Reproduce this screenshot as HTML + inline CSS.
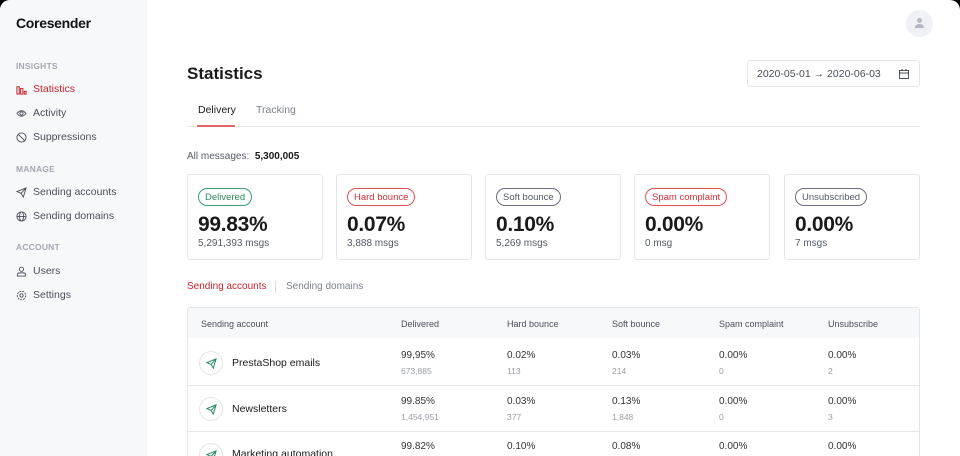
<!DOCTYPE html>
<html><head><meta charset="utf-8"><style>
*{margin:0;padding:0;box-sizing:border-box}
html,body{width:960px;height:456px;overflow:hidden;background:#000;font-family:"Liberation Sans",sans-serif}
.app{position:absolute;left:0;top:0;width:960px;height:456px;background:#fff;border-radius:10px 10px 0 0;overflow:hidden}
.side{position:absolute;left:0;top:0;width:147px;height:456px;background:#f7f8fa}
.abs{position:absolute;white-space:nowrap}
.logo{left:16px;top:15px;font-size:14px;font-weight:bold;color:#111;letter-spacing:-0.3px}
.sec{left:16px;font-size:8.5px;font-weight:bold;color:#a4a8b4;letter-spacing:.2px}
.nav{left:16px;font-size:10.5px;color:#4a4f5c;display:flex;align-items:center;gap:6px}
.nav svg{width:11px;height:11px}
.red{color:#c8242f}
.card{position:absolute;top:174px;width:136px;height:86px;border:1px solid #e3e5ea;border-radius:3px}
.pill{position:absolute;left:10px;top:13px;height:18px;line-height:17px;border:1px solid;border-radius:9px;padding:0 6px;font-size:9.5px}
.big{position:absolute;left:10px;top:38px;font-size:21px;font-weight:bold;color:#1a1a1a;letter-spacing:-0.3px}
.sub{position:absolute;left:10px;top:63px;font-size:10px;color:#555b68}
.th{font-size:9px;color:#4a4f5c;top:319px}
.v{font-size:10px;color:#333}
.s{font-size:8.5px;color:#9a9ea8}
.ic{position:absolute;left:199px;width:24px;height:24px;border:1px solid #e3e5ea;border-radius:12px;display:flex;align-items:center;justify-content:center}
</style></head><body><div class="app">
<div class="side">
<div class="abs logo">Coresender</div>
<div class="abs sec" style="top:61px">INSIGHTS</div>
<div class="abs nav red" style="top:83px"><svg viewBox="0 0 12 12" fill="none" stroke="#c8242f" stroke-width="1.1"><rect x="1" y="3" width="2.5" height="8"/><rect x="5" y="5" width="2.5" height="6"/><rect x="9" y="8" width="2" height="3"/></svg>Statistics</div>
<div class="abs nav" style="top:107px"><svg viewBox="0 0 12 12" fill="none" stroke="#4a4f5c" stroke-width="1"><path d="M1 6Q6 0 11 6Q6 12 1 6Z"/><circle cx="6" cy="6" r="1.8"/></svg>Activity</div>
<div class="abs nav" style="top:131px"><svg viewBox="0 0 12 12" fill="none" stroke="#4a4f5c" stroke-width="1"><circle cx="6" cy="6" r="5"/><path d="M2.5 2.5L9.5 9.5"/></svg>Suppressions</div>
<div class="abs sec" style="top:164px">MANAGE</div>
<div class="abs nav" style="top:186px"><svg viewBox="0 0 12 12" fill="none" stroke="#4a4f5c" stroke-width="1"><path d="M1 5L11 1L8 11L5.5 7Z M5.5 7L11 1"/></svg>Sending accounts</div>
<div class="abs nav" style="top:210px"><svg viewBox="0 0 12 12" fill="none" stroke="#4a4f5c" stroke-width="1"><circle cx="6" cy="6" r="5"/><ellipse cx="6" cy="6" rx="2.2" ry="5"/><path d="M1 6H11"/></svg>Sending domains</div>
<div class="abs sec" style="top:242px">ACCOUNT</div>
<div class="abs nav" style="top:265px"><svg viewBox="0 0 12 12" fill="none" stroke="#4a4f5c" stroke-width="1"><circle cx="6" cy="3.5" r="2.3"/><path d="M1.5 11V9.5Q1.5 7.5 4 7.5H8Q10.5 7.5 10.5 9.5V11Z"/></svg>Users</div>
<div class="abs nav" style="top:289px"><svg viewBox="0 0 12 12" fill="none" stroke="#4a4f5c" stroke-width="1"><circle cx="6" cy="6" r="4.6" stroke-dasharray="2.2 1"/><circle cx="6" cy="6" r="1.8"/></svg>Settings</div>
</div>

<div class="abs" style="left:906px;top:10px;width:27px;height:27px;border-radius:14px;background:#f0f1f4"><svg style="position:absolute;left:8px;top:7px" width="11" height="12" viewBox="0 0 11 12" fill="#b5b9c3"><circle cx="5.5" cy="3.5" r="2.5"/><path d="M1 11Q1 7 5.5 7Q10 7 10 11Z"/></svg></div>
<div class="abs" style="left:187px;top:64px;font-size:17px;font-weight:bold;color:#1a1a1a">Statistics</div>
<div class="abs" style="left:747px;top:60px;width:173px;height:27px;border:1px solid #e3e5ea;border-radius:3px;font-size:10.5px;color:#4a4f5c;line-height:25px;padding-left:9px;padding-top:1px">2020-05-01 → 2020-06-03<svg style="position:absolute;right:10px;top:8px" width="10" height="10" viewBox="0 0 10 10" fill="none" stroke="#4a4f5c" stroke-width="1"><rect x="0.5" y="1.5" width="9" height="8"/><path d="M0.5 4H9.5M3 0V2M7 0V2"/></svg></div>
<div class="abs" style="left:198px;top:104px;font-size:10.5px;color:#1a1a1a">Delivery</div>
<div class="abs" style="left:256px;top:104px;font-size:10.5px;color:#7d8190">Tracking</div>
<div class="abs" style="left:187px;top:126px;width:733px;height:1px;background:#e5e7eb"></div>
<div class="abs" style="left:197px;top:125px;width:38px;height:2px;background:#e06868"></div>

<div class="abs" style="left:187px;top:151px;font-size:10px;color:#555b68">All messages: &nbsp;<b style="color:#1a1a1a">5,300,005</b></div>

<div class="card" style="left:187px"><div class="pill" style="color:#2a8a58;border-color:#3aa070">Delivered</div><div class="big">99.83%</div><div class="sub">5,291,393 msgs</div></div>
<div class="card" style="left:336px"><div class="pill" style="color:#d03038;border-color:#e05058">Hard bounce</div><div class="big">0.07%</div><div class="sub">3,888 msgs</div></div>
<div class="card" style="left:485px"><div class="pill" style="color:#555b68;border-color:#6a6e7e">Soft bounce</div><div class="big">0.10%</div><div class="sub">5,269 msgs</div></div>
<div class="card" style="left:634px"><div class="pill" style="color:#d03038;border-color:#e05058">Spam complaint</div><div class="big">0.00%</div><div class="sub">0 msg</div></div>
<div class="card" style="left:784px"><div class="pill" style="color:#555b68;border-color:#6a6e7e">Unsubscribed</div><div class="big">0.00%</div><div class="sub">7 msgs</div></div>

<div class="abs" style="left:187px;top:281px;font-size:10px;color:#c8242f">Sending accounts</div>
<div class="abs" style="left:275px;top:281px;width:1px;height:12px;background:#d5d8de"></div>
<div class="abs" style="left:286px;top:281px;font-size:10px;color:#7d8190">Sending domains</div>

<div class="abs" style="left:187px;top:307px;width:733px;height:160px;border:1px solid #e3e5ea;border-radius:3px"></div>
<div class="abs" style="left:188px;top:308px;width:731px;height:30px;background:#f7f8fa"></div>
<div class="abs th" style="left:201px">Sending account</div>
<div class="abs th" style="left:401px">Delivered</div>
<div class="abs th" style="left:507px">Hard bounce</div>
<div class="abs th" style="left:612px">Soft bounce</div>
<div class="abs th" style="left:719px">Spam complaint</div>
<div class="abs th" style="left:828px">Unsubscribe</div>
<div class="abs" style="left:188px;top:385px;width:731px;height:1px;background:#e5e7eb"></div>
<div class="abs" style="left:188px;top:431px;width:731px;height:1px;background:#e5e7eb"></div>

<div class="ic" style="top:351px"><svg width="11" height="11" viewBox="0 0 12 12" fill="none" stroke="#2a8a68" stroke-width="1.1"><path d="M1 5L11 1L8 11L5.5 7Z M5.5 7L11 1"/></svg></div>
<div class="abs" style="left:232px;top:357px;font-size:10.5px;color:#1a1a1a">PrestaShop emails</div>
<div class="ic" style="top:397px"><svg width="11" height="11" viewBox="0 0 12 12" fill="none" stroke="#2a8a68" stroke-width="1.1"><path d="M1 5L11 1L8 11L5.5 7Z M5.5 7L11 1"/></svg></div>
<div class="abs" style="left:232px;top:403px;font-size:10.5px;color:#1a1a1a">Newsletters</div>
<div class="ic" style="top:443px"><svg width="11" height="11" viewBox="0 0 12 12" fill="none" stroke="#2a8a68" stroke-width="1.1"><path d="M1 5L11 1L8 11L5.5 7Z M5.5 7L11 1"/></svg></div>
<div class="abs" style="left:232px;top:448px;font-size:10.5px;color:#1a1a1a">Marketing automation</div>

<div class="abs v" style="left:401px;top:350px">99,95%</div><div class="abs s" style="left:401px;top:366px">673,885</div>
<div class="abs v" style="left:507px;top:350px">0.02%</div><div class="abs s" style="left:507px;top:366px">113</div>
<div class="abs v" style="left:612px;top:350px">0.03%</div><div class="abs s" style="left:612px;top:366px">214</div>
<div class="abs v" style="left:719px;top:350px">0.00%</div><div class="abs s" style="left:719px;top:366px">0</div>
<div class="abs v" style="left:828px;top:350px">0.00%</div><div class="abs s" style="left:828px;top:366px">2</div>

<div class="abs v" style="left:401px;top:396px">99.85%</div><div class="abs s" style="left:401px;top:412px">1,454,951</div>
<div class="abs v" style="left:507px;top:396px">0.03%</div><div class="abs s" style="left:507px;top:412px">377</div>
<div class="abs v" style="left:612px;top:396px">0.13%</div><div class="abs s" style="left:612px;top:412px">1,848</div>
<div class="abs v" style="left:719px;top:396px">0.00%</div><div class="abs s" style="left:719px;top:412px">0</div>
<div class="abs v" style="left:828px;top:396px">0.00%</div><div class="abs s" style="left:828px;top:412px">3</div>

<div class="abs v" style="left:401px;top:441px">99.82%</div>
<div class="abs v" style="left:507px;top:441px">0.10%</div>
<div class="abs v" style="left:612px;top:441px">0.08%</div>
<div class="abs v" style="left:719px;top:441px">0.00%</div>
<div class="abs v" style="left:828px;top:441px">0.00%</div>
</div></body></html>
